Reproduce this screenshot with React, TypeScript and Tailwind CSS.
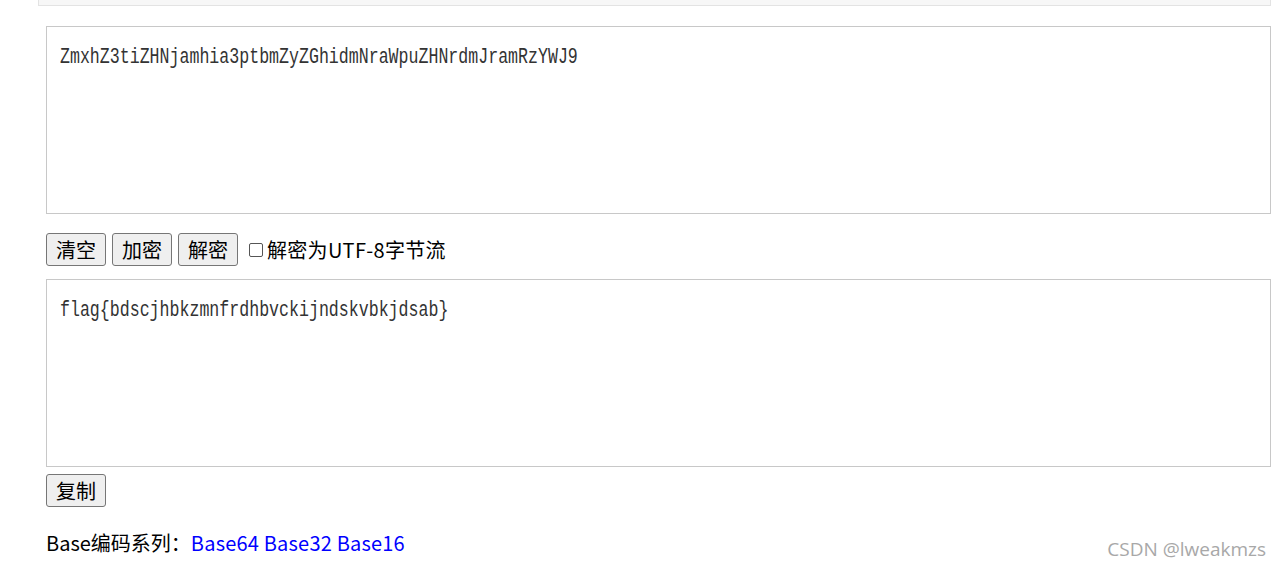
import React from "react";

const cjk = { fontFamily: '"Noto Sans CJK SC", "Noto Sans", sans-serif' };
const mono = { fontFamily: '"Liberation Mono", "Noto Sans CJK SC", monospace' };

function Btn({ children }: { children: React.ReactNode }) {
  return (
    <button
      className="h-[33px] w-[60px] rounded-[3px] border border-[#767676] bg-[#efefef] text-[20px] leading-[20px] text-black flex items-center justify-center"
      style={cjk}
    >
      {children}
    </button>
  );
}

function Box({ text }: { text: string }) {
  return (
    <div className="h-[188px] w-[1225px] border border-[#c8c8c8] bg-white pl-[13px] pt-[13px]">
      <span
        className="inline-block origin-top scale-y-[1.33] text-[16.6px] leading-[16px] text-[#333]"
        style={mono}
      >
        {text}
      </span>
    </div>
  );
}

export default function App() {
  return (
    <div className="relative h-[569px] w-[1281px] overflow-hidden bg-white pl-[46px]" style={cjk}>
      <div className="-ml-[8px] h-[6px] w-[1233px] border-x border-b border-[#e3e3e3] bg-[#f7f7f7]" />
      <div className="mt-[20px]">
        <Box text="ZmxhZ3tiZHNjamhia3ptbmZyZGhidmNraWpuZHNrdmJramRzYWJ9" />
      </div>
      <div className="mt-[19px] flex items-center gap-[6px]">
        <Btn>清空</Btn>
        <Btn>加密</Btn>
        <Btn>解密</Btn>
        <label className="ml-[5px] flex items-center text-[20px] leading-[20px] text-black tracking-[0.3px]">
          <span className="mr-[4px] inline-block h-[14px] w-[14px] rounded-[2px] border border-[#555] bg-white" />
          解密为UTF-8字节流
        </label>
      </div>
      <div className="mt-[13px]">
        <Box text="flag{bdscjhbkzmnfrdhbvckijndskvbkjdsab}" />
      </div>
      <div className="mt-[7px]">
        <Btn>复制</Btn>
      </div>
      <div className="mt-[24px] text-[20px] leading-[24px] text-black">
        Base编码系列：
        <span className="text-[#0000ff] tracking-[0.2px]">Base64 Base32 Base16</span>
      </div>
      <div
        className="absolute right-[15px] top-[537px] text-[19px] leading-[24px] text-[#a8a8a8]"
        style={{ fontFamily: '"Open Sans", "Noto Sans", sans-serif' }}
      >
        CSDN @lweakmzs
      </div>
    </div>
  );
}
